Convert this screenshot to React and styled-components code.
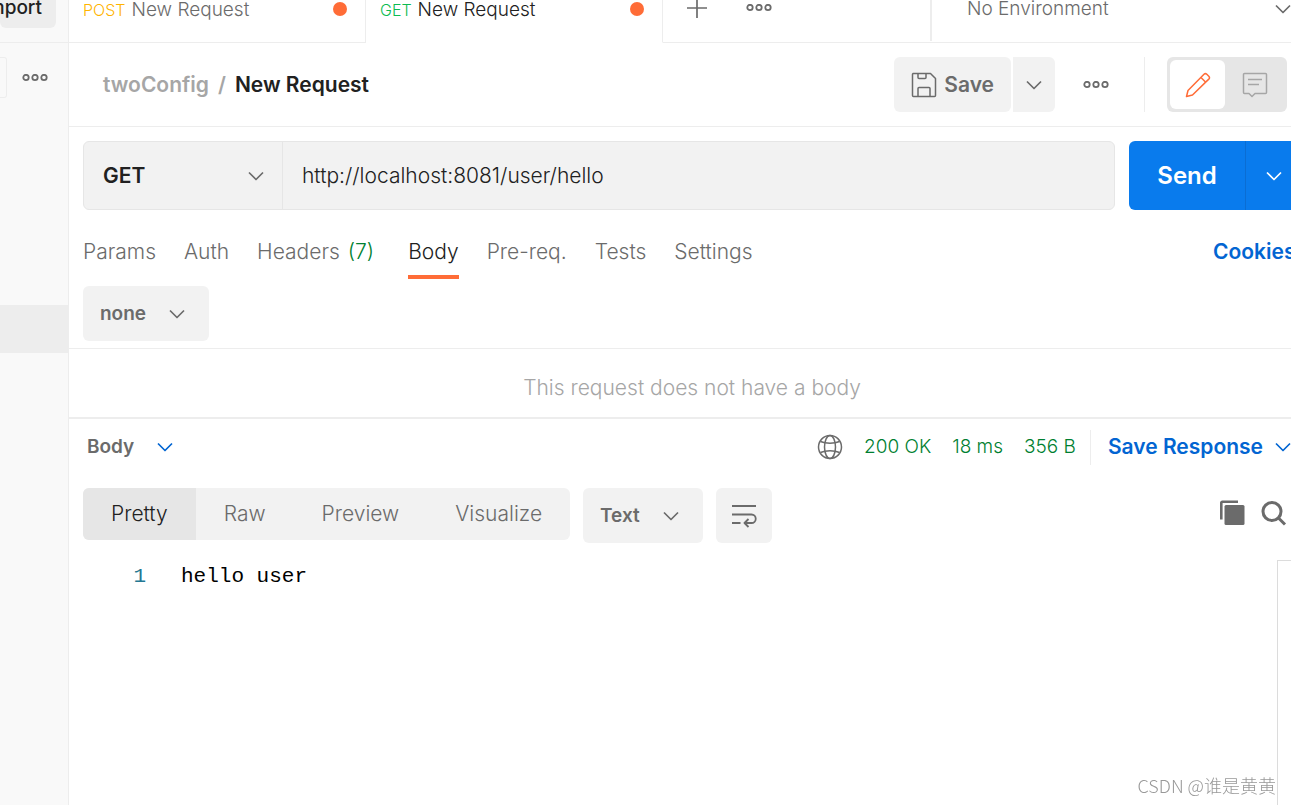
import { createGlobalStyle, styled } from "styled-components";

const requestTabs = [
	{ method: "POST", name: "New Request", color: "#ffb400" },
	{ method: "GET", name: "New Request", color: "#0cbb52", active: true },
];

const sections = [
	{ label: "Params" },
	{ label: "Auth" },
	{ label: "Headers", count: 7 },
	{ label: "Body", active: true },
	{ label: "Pre-req." },
	{ label: "Tests" },
	{ label: "Settings" },
];

const views = ["Pretty", "Raw", "Preview", "Visualize"];

const responseLines = ["hello user"];

export default function App() {
	return (
		<>
			<GlobalStyle />
			<Page>
				<Sidebar />
				<Main>
					<TopBar />
					<RequestHeader />
					<UrlBar />
					<RequestBody />
					<Response />
				</Main>
				<Watermark>CSDN @谁是黄黄</Watermark>
			</Page>
		</>
	);
}

function Sidebar() {
	return (
		<SidebarWrapper>
			<SidebarTop>
				<ImportButton type="button">Import</ImportButton>
			</SidebarTop>
			<SidebarFilter>
				<FilterInput type="text" aria-label="Filter" />
				<IconButton type="button" aria-label="Collection options">
					<DotsIcon />
				</IconButton>
			</SidebarFilter>
			<SelectedItem />
		</SidebarWrapper>
	);
}

function TopBar() {
	return (
		<TopBarWrapper>
			{requestTabs.map((tab) => (
				<RequestTab key={tab.method} type="button" $active={tab.active}>
					<Method $color={tab.color}>{tab.method}</Method>
					<span>{tab.name}</span>
					<UnsavedDot />
				</RequestTab>
			))}
			<TabActions>
				<IconButton type="button" aria-label="New tab">
					<PlusIcon />
				</IconButton>
				<IconButton type="button" aria-label="Tab options">
					<DotsIcon />
				</IconButton>
			</TabActions>
			<Environment>
				<Dropdown label="Environment" value="No Environment" as={EnvironmentSelect} />
			</Environment>
		</TopBarWrapper>
	);
}

function RequestHeader() {
	return (
		<HeaderWrapper>
			<Breadcrumb>
				<Muted>twoConfig</Muted>
				<Muted>/</Muted>
				<span>New Request</span>
			</Breadcrumb>
			<HeaderActions>
				<SaveGroup>
					<SaveButton type="button">
						<SaveIcon />
						Save
					</SaveButton>
					<SaveMore type="button" aria-label="Save options">
						<ChevronIcon />
					</SaveMore>
				</SaveGroup>
				<IconButton type="button" aria-label="Request options">
					<DotsIcon />
				</IconButton>
				<ModeToggle>
					<ModeButton type="button" aria-label="Edit" $active>
						<PencilIcon />
					</ModeButton>
					<ModeButton type="button" aria-label="Comments">
						<CommentIcon />
					</ModeButton>
				</ModeToggle>
			</HeaderActions>
		</HeaderWrapper>
	);
}

function UrlBar() {
	return (
		<UrlRow>
			<UrlBox>
				<Dropdown label="Method" value="GET" as={MethodSelect} />
				<UrlInput
					type="text"
					aria-label="Request URL"
					defaultValue="http://localhost:8081/user/hello"
				/>
			</UrlBox>
			<SendButton type="button">Send</SendButton>
			<SendMore type="button" aria-label="Send options">
				<ChevronIcon />
			</SendMore>
		</UrlRow>
	);
}

function RequestBody() {
	return (
		<>
			<SectionRow>
				<SectionTabs>
					{sections.map((section) => (
						<SectionTab key={section.label} type="button" $active={section.active}>
							{section.label}
							{section.count && <Count>({section.count})</Count>}
						</SectionTab>
					))}
				</SectionTabs>
				<CookiesLink href="#cookies">Cookies</CookiesLink>
			</SectionRow>
			<BodyType>
				<Dropdown label="Body type" value="none" as={BodyTypeSelect} />
			</BodyType>
			<EmptyBody>This request does not have a body</EmptyBody>
		</>
	);
}

function Response() {
	return (
		<>
			<ResponseBar>
				<Dropdown label="Response part" value="Body" as={ResponseSelect} />
				<Stats>
					<GlobeIcon />
					<span>200 OK</span>
					<span>18 ms</span>
					<span>356 B</span>
				</Stats>
				<SaveResponse type="button">
					Save Response
					<ChevronIcon />
				</SaveResponse>
			</ResponseBar>
			<ViewBar>
				<Segments>
					{views.map((view, i) => (
						<Segment key={view} type="button" $active={i === 0}>
							{view}
						</Segment>
					))}
				</Segments>
				<Dropdown label="Format" value="Text" as={FormatSelect} />
				<WrapButton type="button" aria-label="Wrap lines">
					<WrapIcon />
				</WrapButton>
				<ViewActions>
					<IconButton type="button" aria-label="Copy">
						<CopyIcon />
					</IconButton>
					<IconButton type="button" aria-label="Search">
						<SearchIcon />
					</IconButton>
				</ViewActions>
			</ViewBar>
			<CodeArea>
				<CodeLines>
					{responseLines.map((line, i) => (
						<CodeLine key={i}>
							<LineNumber>{i + 1}</LineNumber>
							<code>{line}</code>
						</CodeLine>
					))}
				</CodeLines>
				<ScrollTrack />
			</CodeArea>
		</>
	);
}

function Dropdown({ label, value, as: Wrapper }) {
	return (
		<Wrapper>
			<select aria-label={label} defaultValue={value}>
				<option>{value}</option>
			</select>
			<ChevronIcon />
		</Wrapper>
	);
}

function ChevronIcon() {
	return (
		<Icon width="16" height="10" viewBox="0 0 16 10" $stroke={1.7}>
			<path d="M1 1.5l7 7 7-7" />
		</Icon>
	);
}

function DotsIcon() {
	return (
		<Icon width="26" height="8" viewBox="0 0 26 8" $stroke={1.8}>
			<circle cx="4" cy="3.5" r="2.7" />
			<circle cx="13" cy="3.5" r="2.7" />
			<circle cx="22" cy="3.5" r="2.7" />
		</Icon>
	);
}

function PlusIcon() {
	return (
		<Icon width="22" height="22" viewBox="0 0 22 22" $stroke={1.7}>
			<path d="M11 1v20M1 11h20" />
		</Icon>
	);
}

function SaveIcon() {
	return (
		<Icon width="26" height="26" viewBox="0 0 26 26">
			<path d="M2 1.5h17.5l5 5V23.5a1 1 0 0 1-1 1h-21a1 1 0 0 1-1-1v-21a1 1 0 0 1 1-1z" />
			<path d="M7 1.5v4a1 1 0 0 0 1 1h6a1 1 0 0 0 1-1v-4M7 24.5v-8a1 1 0 0 1 1-1h10a1 1 0 0 1 1 1v8" />
		</Icon>
	);
}

function PencilIcon() {
	return (
		<Icon width="26" height="26" viewBox="0 0 26 26">
			<path d="M1.5 24.5l1.5-6L19 2.3a2 2 0 0 1 2.8 0l2 2a2 2 0 0 1 0 2.8L7.5 23z" />
			<path d="M16 5.5l4.7 4.7" />
		</Icon>
	);
}

function CommentIcon() {
	return (
		<Icon width="26" height="26" viewBox="0 0 26 26">
			<path d="M2.5 1.5h21a1 1 0 0 1 1 1v18a1 1 0 0 1-1 1H13l-3 3-3-3H2.5a1 1 0 0 1-1-1v-18a1 1 0 0 1 1-1z" />
			<path d="M6 7.5h14M6 12.5h11" />
		</Icon>
	);
}

function GlobeIcon() {
	return (
		<Icon width="26" height="26" viewBox="0 0 26 26">
			<circle cx="13" cy="13" r="11.5" />
			<ellipse cx="13" cy="13" rx="5.5" ry="11.5" />
			<path d="M3.5 7.5c5 2.3 14 2.3 19 0M3.5 18.5c5-2.3 14-2.3 19 0" />
		</Icon>
	);
}

function WrapIcon() {
	return (
		<Icon width="26" height="24" viewBox="0 0 26 24" $stroke={1.8}>
			<path d="M1 2h24M1 10.5h19.5a4.2 4.2 0 0 1 0 8.5H14M1 19h8.500M17.500 15l-4 4 4 4" />
		</Icon>
	);
}

function CopyIcon() {
	return (
		<Icon width="26" height="26" viewBox="0 0 26 26" $stroke={2.6}>
			<path d="M2.3 19.5V2.8a1 1 0 0 1 1-1H19" />
			<rect x="5.5" y="5" width="20" height="20" rx="1.5" fill="currentColor" stroke="none" />
		</Icon>
	);
}

function SearchIcon() {
	return (
		<Icon width="26" height="26" viewBox="0 0 26 26" $stroke={3}>
			<circle cx="11" cy="11.5" r="9" />
			<path d="M17.5 18l6.5 6.5" />
		</Icon>
	);
}

const GlobalStyle = createGlobalStyle`
	* {
		box-sizing: border-box;
	}

	body {
		margin: 0;
		background: #ffffff;
		color: #212121;
		font-family: Inter, "Noto Sans CJK SC", sans-serif;
		font-size: 21px;
		font-weight: 300;
		line-height: 28px;
	}

	button,
	input,
	select {
		margin: 0;
		padding: 0;
		border: none;
		outline: none;
		background: none;
		color: inherit;
		font: inherit;
		white-space: nowrap;
	}

	button {
		cursor: pointer;
	}
`;

const Icon = styled.svg`
	display: block;
	flex: none;
	fill: none;
	stroke: currentColor;
	stroke-width: ${({ $stroke }) => $stroke || 1.5};
	stroke-linejoin: round;
`;

const IconButton = styled.button`
	display: flex;
	align-items: center;
	justify-content: center;
	color: #6b6b6b;
`;

const Page = styled.div`
	display: flex;
	min-height: 100vh;
	overflow: hidden;
`;

const SidebarWrapper = styled.aside`
	flex: none;
	width: 69px;
	border-right: 1px solid #ededed;
	background: #f9f9f9;
`;

const SidebarTop = styled.div`
	height: 43px;
	border-bottom: 1px solid #ededed;
	overflow: hidden;
`;

const ImportButton = styled.button`
	display: flex;
	justify-content: flex-end;
	width: 56px;
	height: 28px;
	padding-right: 14px;
	border-radius: 0 0 6px 6px;
	background: #ededed;
	font-size: 19px;
	font-weight: 500;
	line-height: 16px;
`;

const SidebarFilter = styled.div`
	display: flex;
	justify-content: space-between;
	padding: 14px 20px 14px 0;
`;

const FilterInput = styled.input`
	width: 7px;
	height: 41px;
	border: 1px solid #ededed;
	border-left: none;
	border-radius: 0 3px 3px 0;
`;

const SelectedItem = styled.div`
	height: 48px;
	margin-top: 193px;
	background: #ededed;
`;

const Main = styled.main`
	display: flex;
	flex: 1;
	flex-direction: column;
	min-width: 0;
`;

const TopBarWrapper = styled.div`
	display: flex;
	height: 43px;
	line-height: 18px;
`;

const RequestTab = styled.button`
	display: flex;
	align-items: flex-start;
	gap: 6px;
	flex: 0 1 297px;
	padding: 1px 18px 0 14px;
	border-right: 1px solid #ededed;
	border-bottom: 1px solid ${({ $active }) => ($active ? "#ffffff" : "#ededed")};
	color: ${({ $active }) => ($active ? "#212121" : "#6b6b6b")};
	font-size: 19px;
`;

const Method = styled.span`
	color: ${({ $color }) => $color};
	font-size: 16px;
`;

const UnsavedDot = styled.i`
	width: 14px;
	height: 14px;
	margin: 1px 0 0 auto;
	border-radius: 50%;
	background: #ff6c37;
`;

const TabActions = styled.div`
	display: flex;
	flex: 1;
	align-items: flex-start;
	gap: 38px;
	padding-left: 23px;
	border-bottom: 1px solid #ededed;

	button {
		height: 15px;
	}
`;

const Environment = styled.div`
	flex: 0 1 361px;
	border-bottom: 1px solid #ededed;
`;

const SelectBox = styled.label`
	display: grid;
	align-items: center;
	flex: none;
	color: #6b6b6b;

	select,
	svg {
		grid-area: 1 / 1;
	}

	select {
		width: 100%;
		height: 100%;
		appearance: none;
		cursor: pointer;
	}

	svg {
		justify-self: end;
		pointer-events: none;
	}
`;

const EnvironmentSelect = styled(SelectBox)`
	height: 41px;
	padding-bottom: 26px;
	border-left: 2px solid #ededed;
	font-size: 19px;

	select {
		padding-left: 35px;
	}
`;

const HeaderWrapper = styled.header`
	display: flex;
	align-items: center;
	justify-content: space-between;
	padding: 14px 4px 14px 34px;
	border-bottom: 1px solid #ededed;
`;

const Breadcrumb = styled.div`
	display: flex;
	gap: 9px;
	font-weight: 600;
	white-space: nowrap;
`;

const Muted = styled.span`
	color: #a6a6a6;
`;

const HeaderActions = styled.div`
	display: flex;
	align-items: center;
	gap: 28px;
`;

const SaveGroup = styled.div`
	display: flex;
	gap: 2px;
`;

const SaveButton = styled.button`
	display: flex;
	align-items: center;
	gap: 7px;
	height: 55px;
	padding: 0 17px;
	border-radius: 6px;
	background: #f2f2f2;
	color: #6b6b6b;
	font-weight: 600;
`;

const SaveMore = styled.button`
	display: flex;
	align-items: center;
	justify-content: center;
	width: 42px;
	border-radius: 0 6px 6px 0;
	background: #f2f2f2;
	color: #6b6b6b;
`;

const ModeToggle = styled.div`
	display: flex;
	position: relative;
	width: 120px;
	height: 55px;
	margin-left: 30px;
	padding: 3px;
	border-radius: 6px;
	background: #e6e6e6;

	&::before {
		content: "";
		position: absolute;
		top: 0;
		bottom: 0;
		left: -23px;
		border-left: 1px solid #ededed;
	}
`;

const ModeButton = styled.button`
	display: flex;
	align-items: center;
	justify-content: center;
	flex: ${({ $active }) => ($active ? "0 0 55px" : "1")};
	border-radius: 6px;
	background: ${({ $active }) => ($active ? "#ffffff" : "transparent")};
	color: ${({ $active }) => ($active ? "#ff6c37" : "#a6a6a6")};
`;

const UrlRow = styled.div`
	display: flex;
	height: 83px;
	padding: 14px 0 0 14px;
`;

const UrlBox = styled.div`
	display: flex;
	flex: 1;
	min-width: 0;
	margin-right: 14px;
	border: 1px solid #e6e6e6;
	border-radius: 6px;
	background: #f2f2f2;
`;

const MethodSelect = styled(SelectBox)`
	width: 199px;
	padding-right: 18px;
	border-right: 1px solid #e6e6e6;

	select {
		padding-left: 19px;
		color: #212121;
		font-weight: 600;
	}
`;

const UrlInput = styled.input`
	flex: 1;
	min-width: 0;
	padding: 0 19px;
`;

const SendButton = styled.button`
	width: 116px;
	border-radius: 6px 0 0 6px;
	background: #097bed;
	color: #ffffff;
	font-size: 24px;
	font-weight: 600;
`;

const SendMore = styled.button`
	display: flex;
	align-items: center;
	width: 46px;
	padding-left: 20px;
	border-left: 1px solid #0a6dd3;
	background: #097bed;
	color: #ffffff;
`;

const SectionRow = styled.div`
	display: flex;
	justify-content: space-between;
	height: 69px;
	padding-left: 14px;
`;

const SectionTabs = styled.nav`
	display: flex;
	gap: 28px;
`;

const SectionTab = styled.button`
	display: flex;
	align-items: center;
	gap: 8px;
	padding-top: 18px;
	border-bottom: 4px solid ${({ $active }) => ($active ? "#ff6c37" : "transparent")};
	color: ${({ $active }) => ($active ? "#212121" : "#6b6b6b")};
`;

const Count = styled.span`
	padding-right: 6px;
	color: #007f31;
`;

const CookiesLink = styled.a`
	width: 78px;
	padding-top: 28px;
	color: #0265d2;
	font-weight: 600;
	text-decoration: none;
`;

const BodyType = styled.div`
	display: flex;
	padding: 7px 14px;
	border-bottom: 1px solid #ededed;
`;

const BodyTypeSelect = styled(SelectBox)`
	width: 126px;
	height: 55px;
	padding-right: 24px;
	border-radius: 6px;
	background: #f2f2f2;
	font-size: 19px;
	font-weight: 600;

	select {
		padding-left: 17px;
	}
`;

const EmptyBody = styled.p`
	margin: 0;
	padding: 25px 0 15px 24px;
	border-bottom: 2px solid #ededed;
	color: #a6a6a6;
	text-align: center;
`;

const ResponseBar = styled.div`
	display: flex;
	align-items: center;
	height: 56px;
	padding-left: 18px;
`;

const ResponseSelect = styled(SelectBox)`
	width: 86px;
	font-size: 19px;
	font-weight: 600;

	svg {
		color: #0265d2;
	}
`;

const Stats = styled.div`
	display: flex;
	align-items: center;
	gap: 21px;
	margin-left: auto;
	padding-right: 14px;
	color: #007f31;
	font-size: 19px;
	white-space: nowrap;

	svg {
		color: #6b6b6b;
	}
`;

const SaveResponse = styled.button`
	display: flex;
	align-items: center;
	gap: 12px;
	height: 35px;
	padding-left: 17px;
	border-left: 1px solid #ededed;
	color: #0265d2;
	font-weight: 600;
`;

const ViewBar = styled.div`
	display: flex;
	align-items: flex-start;
	gap: 13px;
	padding: 13px 4px 17px 14px;
`;

const Segments = styled.div`
	display: flex;
	border-radius: 6px;
	background: #f2f2f2;
	overflow: hidden;
`;

const Segment = styled.button`
	height: 52px;
	padding: 0 28px;
	background: ${({ $active }) => ($active ? "#e6e6e6" : "transparent")};
	color: ${({ $active }) => ($active ? "#212121" : "#6b6b6b")};
`;

const FormatSelect = styled(BodyTypeSelect)`
	width: 120px;
`;

const WrapButton = styled(IconButton)`
	width: 56px;
	height: 55px;
	border-radius: 6px;
	background: #f2f2f2;
`;

const ViewActions = styled.div`
	display: flex;
	gap: 16px;
	margin-left: auto;
	padding-top: 12px;
`;

const CodeArea = styled.div`
	display: flex;
	flex: 1;
	justify-content: space-between;
`;

const CodeLines = styled.div`
	color: #000000;
	font-family: "Liberation Mono", monospace;
	line-height: 34px;

	code {
		font: inherit;
	}
`;

const CodeLine = styled.div`
	display: flex;
	gap: 35px;
`;

const LineNumber = styled.span`
	width: 77px;
	color: #237893;
	text-align: right;
`;

const ScrollTrack = styled.div`
	width: 14px;
	border-top: 1px solid #dcdcdc;
	border-left: 1px solid #dcdcdc;
`;

const Watermark = styled.div`
	position: fixed;
	right: 15px;
	bottom: 6px;
	color: #999999;
	font-family: "Noto Sans CJK SC", sans-serif;
	font-size: 18px;
	font-weight: 300;
`;
